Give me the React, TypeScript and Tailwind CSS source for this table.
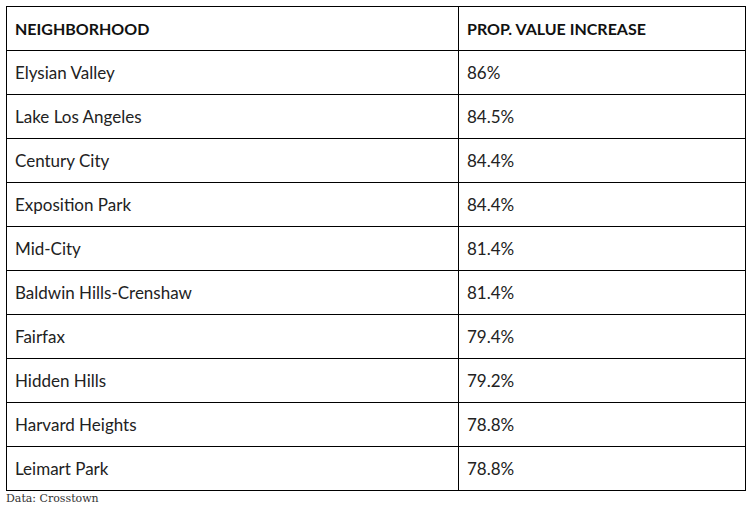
import React from "react";

const rows: [string, string][] = [
  ["Elysian Valley", "86%"],
  ["Lake Los Angeles", "84.5%"],
  ["Century City", "84.4%"],
  ["Exposition Park", "84.4%"],
  ["Mid-City", "81.4%"],
  ["Baldwin Hills-Crenshaw", "81.4%"],
  ["Fairfax", "79.4%"],
  ["Hidden Hills", "79.2%"],
  ["Harvard Heights", "78.8%"],
  ["Leimart Park", "78.8%"],
];

export default function App() {
  return (
    <div className="w-[751px] h-[516px] bg-white pt-[6px] pl-[6px]" style={{ fontFamily: "Lato, 'Open Sans', sans-serif" }}>
      <table className="w-[740px] border-collapse text-[#222]">
        <colgroup>
          <col className="w-[452px]" />
          <col />
        </colgroup>
        <thead>
          <tr className="h-[44px]">
            <th className="border border-black text-left font-bold text-[16px] px-[8px] align-middle text-[#111]">NEIGHBORHOOD</th>
            <th className="border border-black text-left font-bold text-[16px] px-[8px] align-middle text-[#111]">PROP. VALUE INCREASE</th>
          </tr>
        </thead>
        <tbody>
          {rows.map(([n, v]) => (
            <tr key={n} className="h-[44px]">
              <td className="border border-black text-left text-[17px] px-[8px] align-middle leading-[20px]">{n}</td>
              <td className="border border-black text-left text-[17px] px-[8px] align-middle leading-[20px]">{v}</td>
            </tr>
          ))}
        </tbody>
      </table>
      <div className="text-[11px] text-[#333] leading-[16px]" style={{ fontFamily: "'DejaVu Serif', serif" }}>
        Data: Crosstown
      </div>
    </div>
  );
}
